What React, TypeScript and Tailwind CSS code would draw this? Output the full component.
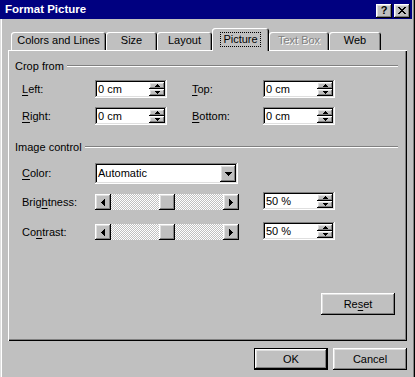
import React from "react";

// classic 3D bevels
const raised =
  "bg-[#c0c0c0] shadow-[inset_-1px_-1px_#000,inset_1px_1px_#fff,inset_-2px_-2px_#808080,inset_2px_2px_#dfdfdf]";
const sunken =
  "bg-white shadow-[inset_-1px_-1px_#fff,inset_1px_1px_#808080,inset_-2px_-2px_#dfdfdf,inset_2px_2px_#000]";

function Px({ w, h, d }: { w: number; h: number; d: string }) {
  return (
    <svg width={w} height={h} viewBox={`0 0 ${w} ${h}`} shapeRendering="crispEdges">
      <path d={d} fill="#000" />
    </svg>
  );
}

const upArrow = "M2 0h1v1h1v1h1v1h-5v-1h1v-1h1z";
const downArrow = "M0 0h5v1h-1v1h-1v1h-1v-1h-1v-1h-1z";
const leftArrow = "M3 0h1v7h-1v-1h-1v-1h-1v-1h-1v-1h1v-1h1v-1h1z";
const rightArrow = "M0 0h1v1h1v1h1v1h1v1h-1v1h-1v1h-1v1h-1z";
const comboArrow = "M0 0h7v1h-1v1h-1v1h-1v1h-1v-1h-1v-1h-1v-1h-1z";

function CloseGlyph() {
  const rows = ["xx....xx", ".xx..xx.", "..xxxx..", "...xx...", "..xxxx..", ".xx..xx.", "xx....xx"];
  return (
    <svg width="8" height="7" viewBox="0 0 8 7" shapeRendering="crispEdges">
      {rows.map((r, y) =>
        r.split("").map((c, x) => (c === "x" ? <rect key={`${x}-${y}`} x={x} y={y} width="1" height="1" fill="#000" /> : null))
      )}
    </svg>
  );
}

function SpinField({ value }: { value: string }) {
  return (
    <div className={`flex w-[72px] h-[18px] p-[2px] ${sunken}`}>
      <div className="flex-1 pl-[1px] leading-[14px]">{value}</div>
      <div className="flex flex-col w-[16px]">
        <div className={`h-[7px] flex items-center justify-center ${raised}`}>
          <Px w={5} h={3} d={upArrow} />
        </div>
        <div className={`h-[7px] flex items-center justify-center ${raised}`}>
          <Px w={5} h={3} d={downArrow} />
        </div>
      </div>
    </div>
  );
}

function Slider() {
  return (
    <div className="mt-[2px] flex w-[144px] h-[16px] bg-[repeating-conic-gradient(#fff_0%_25%,#c0c0c0_0%_50%)] bg-[length:2px_2px]">
      <div className={`w-[16px] h-[16px] flex items-center justify-center ${raised}`}>
        <Px w={4} h={7} d={leftArrow} />
      </div>
      <div className="flex-1 flex justify-center">
        <div className={`w-[16px] h-[16px] ${raised}`} />
      </div>
      <div className={`w-[16px] h-[16px] flex items-center justify-center ${raised}`}>
        <Px w={4} h={7} d={rightArrow} />
      </div>
    </div>
  );
}

function GroupHeading({ title }: { title: string }) {
  return (
    <div className="flex items-center h-[12px] pl-[7px] pr-[9px]">
      <span className="leading-[12px]">{title}</span>
      <div className="flex-1 ml-[3px] h-[2px] border-t border-[#808080] border-b border-b-white" />
    </div>
  );
}

function Key({ children }: { children: React.ReactNode }) {
  return <span className="underline underline-offset-[2px]">{children}</span>;
}

const tabs = [
  { label: "Colors and Lines", w: "w-[95px]" },
  { label: "Size", w: "w-[51px]" },
  { label: "Layout", w: "w-[55px]" },
  { label: "Picture", w: "w-[57px]", active: true },
  { label: "Text Box", w: "w-[60px]", disabled: true },
  { label: "Web", w: "w-[52px]" },
];

export default function App() {
  return (
    <div className="w-[415px] h-[377px] overflow-hidden bg-[#c0c0c0] text-[11px] text-black font-['Liberation_Sans',Arial,sans-serif] shadow-[inset_1px_0_#dfdfdf,inset_2px_0_#fff,inset_-1px_0_#000,inset_-2px_0_#808080] select-none">
      {/* title bar */}
      <div className="mr-[3px] h-[19px] bg-[#000080] flex items-center pl-[5px] pr-[2px]">
        <span className="text-white font-bold text-[11.5px]">Format Picture</span>
        <div className="ml-auto flex gap-[2px] mt-[2px]">
          <div className={`w-[16px] h-[14px] flex items-center justify-center font-bold text-[11px] leading-none ${raised}`}>?</div>
          <div className={`w-[16px] h-[14px] flex items-center justify-center ${raised}`}>
            <CloseGlyph />
          </div>
        </div>
      </div>

      {/* tabs */}
      <div className="mt-[9px] h-[22px] flex items-end pl-[11px]">
        {tabs.map((t) =>
          t.active ? (
            <div
              key={t.label}
              className={`${t.w} h-[23px] -mb-[1px] relative z-10 bg-[#c0c0c0] rounded-t-[3px] shadow-[inset_1px_1px_#fff,inset_-1px_0_#000,inset_-2px_0_#808080] flex justify-center pt-[4px]`}
            >
              <span className="h-[15px] px-[2px] border border-dotted border-black leading-[13px]">{t.label}</span>
            </div>
          ) : (
            <div
              key={t.label}
              className={`${t.w} h-[18px] rounded-t-[3px] shadow-[inset_1px_1px_#fff,inset_-1px_0_#000,inset_-2px_0_#808080] flex items-center justify-center pb-[1px] ${
                t.disabled ? "text-[#808080] [text-shadow:1px_1px_#fff]" : ""
              }`}
            >
              {t.label}
            </div>
          )
        )}
      </div>

      {/* panel */}
      <div className="ml-[8px] w-[399px] h-[291px] flex flex-col shadow-[inset_1px_1px_#fff,inset_-1px_-1px_#000,inset_-2px_-2px_#808080]">
        <div className="mt-[10px]">
          <GroupHeading title="Crop from" />
        </div>
        <div className="mt-[8px] flex items-center h-[18px] pl-[14px]">
          <span className="w-[73px]"><Key>L</Key>eft:</span>
          <SpinField value="0 cm" />
          <span className="ml-[25px] w-[71px]"><Key>T</Key>op:</span>
          <SpinField value="0 cm" />
        </div>
        <div className="mt-[9px] flex items-center h-[18px] pl-[14px]">
          <span className="w-[73px]"><Key>R</Key>ight:</span>
          <SpinField value="0 cm" />
          <span className="ml-[25px] w-[71px]"><Key>B</Key>ottom:</span>
          <SpinField value="0 cm" />
        </div>

        <div className="mt-[16px]">
          <GroupHeading title="Image control" />
        </div>
        <div className="mt-[10px] flex items-center h-[21px] pl-[14px]">
          <span className="w-[73px]"><Key>C</Key>olor:</span>
          <div className={`flex w-[143px] h-[21px] p-[2px] ${sunken}`}>
            <div className="flex-1 pl-[1px] leading-[17px]">Automatic</div>
            <div className={`w-[16px] h-[17px] flex items-center justify-center ${raised}`}>
              <Px w={7} h={4} d={comboArrow} />
            </div>
          </div>
        </div>
        <div className="mt-[8px] flex items-start h-[18px] pl-[14px]">
          <span className="w-[73px] mt-[2px] leading-[16px]">Brig<Key>h</Key>tness:</span>
          <Slider />
          <div className="ml-[24px]">
            <SpinField value="50 %" />
          </div>
        </div>
        <div className="mt-[12px] flex items-start h-[18px] pl-[14px]">
          <span className="w-[73px] mt-[2px] leading-[16px]">Co<Key>n</Key>trast:</span>
          <Slider />
          <div className="ml-[24px]">
            <SpinField value="50 %" />
          </div>
        </div>

        <div className="mt-auto mb-[26px] flex justify-end pr-[12px]">
          <div className={`w-[74px] h-[22px] flex items-center justify-center ${raised}`}>
            Re<Key>s</Key>et
          </div>
        </div>
      </div>

      {/* dialog buttons */}
      <div className="mt-[7px] flex justify-end gap-[5px] pr-[8px]">
        <div className="w-[74px] h-[22px] border border-black">
          <div className={`w-full h-full flex items-center justify-center ${raised}`}>OK</div>
        </div>
        <div className={`w-[74px] h-[22px] flex items-center justify-center ${raised}`}>Cancel</div>
      </div>
    </div>
  );
}
